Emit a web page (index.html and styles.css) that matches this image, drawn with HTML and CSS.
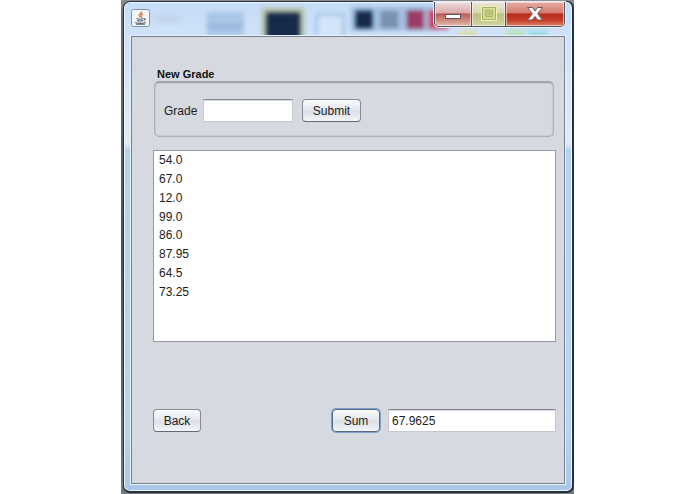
FILE: index.html
```html
<!DOCTYPE html>
<html lang="en">
<head>
<meta charset="utf-8">
<title>Grades</title>
<link rel="stylesheet" href="styles.css">
</head>
<body>
<div class="desktop">
  <div class="window">
    <svg class="glass" viewBox="0 0 447 35" preserveAspectRatio="none" aria-hidden="true">
      <defs>
        <filter id="soft" x="-30%" y="-30%" width="160%" height="160%"><feGaussianBlur stdDeviation="2"/></filter>
        <filter id="wide" x="-50%" y="-50%" width="200%" height="200%"><feGaussianBlur stdDeviation="4"/></filter>
      </defs>
      <rect x="30" y="13" width="25" height="7" fill="#a9b9cf" opacity=".4" filter="url(#wide)"/>
      <g filter="url(#soft)">
        <rect x="82" y="9" width="37" height="25" fill="#a9c6e8"/>
        <rect x="82" y="22" width="37" height="3" fill="#8fafd6"/>
        <rect x="137" y="5" width="43" height="34" fill="#b7c3a8"/>
        <rect x="192" y="12" width="27" height="30" fill="#d4e5f9" stroke="#a5c4e8" stroke-width="3"/>
        <rect x="226" y="3" width="90" height="26" fill="#a6c3e4"/>
        <rect x="256" y="8" width="18" height="18" fill="#7891ad"/>
        <rect x="282" y="7" width="18" height="20" fill="#9c3a68"/>
        <rect x="304" y="7" width="20" height="20" fill="#cf3c64"/>
        <rect x="334" y="28" width="18" height="10" fill="#d9dfae"/>
        <rect x="382" y="28" width="18" height="10" fill="#b5e3b9"/>
        <rect x="404" y="28" width="20" height="10" fill="#9edce6"/>
      </g>
      <g fill="#142a4a" filter="url(#soft)">
        <rect x="142" y="10" width="33" height="30"/>
        <rect x="142" y="10" width="33" height="30"/>
        <rect x="231" y="8" width="17" height="18"/>
      </g>
    </svg>
    <header class="titlebar">
      <svg class="java" viewBox="0 0 19 18" role="img" aria-label="Java">
        <rect x=".5" y=".5" width="18" height="17" rx="2" fill="#f3f5f7" stroke="#8292a5"/>
        <path d="M10.500 2.500c1 1.600-2.600 2.400-2.300 4 .1.800 1 1.200 1 2M12 5c-1.700.5-2.300 1.300-1.500 2.200.5.600.2 1-.3 1.500" fill="none" stroke="#dd7c42" stroke-width="1.400"/>
        <path d="M5.500 9.500c1.500.7 5 .7 7 0M6 11.500c1.500.6 4 .6 6 0M12.700 9.700c2-.5 2 1.300 0 1.800M4 13.500c2 .9 9 .9 11 0M5 15.300h9" fill="none" stroke="#56687c" stroke-width="1.100"/>
      </svg>
      <div class="captions">
        <button class="cap min" aria-label="Minimize">
          <svg viewBox="0 0 20 16"><rect x="2.500" y="8.500" width="15" height="4" fill="#fff" stroke="#5c5558"/></svg>
        </button>
        <button class="cap max" aria-label="Maximize">
          <svg viewBox="0 0 20 16"><rect x="2" y="0" width="16" height="15" fill="#eef2b0"/><path d="M3.500 1.500h13v12h-13zM6.500 4.500h7v6h-7z" fill="#d5dc92" stroke="#a5b365"/><rect x="7.500" y="5.500" width="5" height="4" fill="#b1c271"/></svg>
        </button>
        <button class="cap close" aria-label="Close">
          <svg viewBox="0 0 20 16"><path d="M2.500 1.500h5l2.500 3.500 2.500-3.500h5l-4.800 6.200 4.800 6.300h-5l-2.500-3.500-2.500 3.500h-5l4.800-6.300z" fill="#fff" stroke="#765254"/></svg>
        </button>
      </div>
    </header>
    <main class="content">
      <section class="group" aria-labelledby="group-title">
        <h1 id="group-title">New Grade</h1>
        <form class="panel">
          <label for="grade">Grade</label>
          <input id="grade" class="field short" type="text">
          <button class="btn submit" type="button">Submit</button>
        </form>
      </section>
      <div class="list">
        <ul>
          <li>54.0</li>
          <li>67.0</li>
          <li>12.0</li>
          <li>99.0</li>
          <li>86.0</li>
          <li>87.95</li>
          <li>64.5</li>
          <li>73.25</li>
        </ul>
      </div>
      <footer class="actions">
        <button class="btn" type="button">Back</button>
        <div class="result">
          <button class="btn active" type="button">Sum</button>
          <input class="field" type="text" value="67.9625" aria-label="Sum result">
        </div>
      </footer>
    </main>
  </div>
</div>
</body>
</html>
```
FILE: styles.css
```css
* {
  box-sizing: border-box;
}

body {
  margin: 0;
  background: #fff;
  color: #1c1c20;
  font: 12px/16px "Liberation Sans", Arial, sans-serif;
}

button,
input {
  margin: 0;
  font: inherit;
  color: inherit;
}

.desktop {
  display: flex;
  min-height: 100vh;
  margin: 0 121px;
  padding: 1px 0 1px 2px;
  background: linear-gradient(#8d8f92, #686e76 12px, #4b535c 50%, #737980);
}

.window {
  position: relative;
  flex: 1;
  display: flex;
  flex-direction: column;
  padding: 0 7px 7px;
  border: 1px solid #28323c;
  border-width: 1px 2px 2px 1px;
  border-radius: 7px;
  background: linear-gradient(#c6dcf7, #d0e3f9 36px, #e2ebf6 142px, #b5d4f0 148px, #b8d4f0 430px, #a9c5e8);
  box-shadow: inset 0 0 0 1px #eaf6ff;
}

.glass {
  position: absolute;
  inset: 1px 1px auto;
  width: calc(100% - 2px);
  height: 34px;
}

.titlebar {
  position: relative;
  display: flex;
  justify-content: space-between;
  align-items: flex-start;
  height: 34px;
}

.java {
  width: 19px;
  height: 18px;
  margin-top: 7px;
}

.captions {
  display: flex;
  height: 25px;
  border: 1px solid #4f5560;
  border-top: 0;
  border-radius: 0 0 5px 5px;
  box-shadow: 0 0 0 1px #e9eef6;
  overflow: hidden;
}

.cap {
  display: flex;
  justify-content: center;
  align-items: center;
  width: 36px;
  padding: 0;
  border: 0;
  border-right: 1px solid #5b5357;
  box-shadow: inset 0 0 0 1px #ffffff88;
}

.cap svg {
  width: 20px;
  height: 16px;
}

.min {
  width: 37px;
  background: linear-gradient(#eedce0, #dda9a9 45%, #b65c59 50%, #cc8b7b 75%, #dfbdb0);
}

.max {
  width: 34px;
  background: linear-gradient(#e9e4d8, #dcd6b0 45%, #bdbd82 50%, #d2d3a0);
}

.close {
  width: 58px;
  border-right: 0;
  background: linear-gradient(#e5aca4, #d57d70 45%, #b92d1b 50%, #c63d28 75%, #dd8065);
}

.content {
  position: relative;
  flex: 1;
  display: flex;
  flex-direction: column;
  padding: 30px 8px 51px 21px;
  border: 1px solid #77818e;
  box-shadow: 0 0 0 1px #e8f2fd;
  background: #d6d9e0;
}

.group {
  margin: 0 2px 0 1px;
}

h1 {
  margin: 0 3px;
  font-size: 11px;
  line-height: 14px;
  color: #111;
}

.panel {
  display: flex;
  align-items: center;
  height: 56px;
  padding: 2px 9px 0;
  border: 1px solid #adb0b7;
  border-top: 2px solid #a1a4ab;
  border-radius: 5px;
  box-shadow: inset 0 0 2px #a9acb3;
}

.panel label {
  flex: none;
  width: 39px;
}

.field {
  flex: 1;
  min-width: 0;
  height: 23px;
  padding: 0 3px;
  border: 1px solid #c6c9d0;
  border-top-color: #84878e;
  background: #fff;
  box-shadow: inset 0 1px 0 #d5d7dc;
}

.short {
  flex: none;
  width: 90px;
}

.btn {
  flex: none;
  width: 48px;
  height: 23px;
  padding: 0;
  border: 1px solid #868a93;
  border-bottom-color: #656a74;
  border-radius: 4px;
  background: linear-gradient(#fafbfc, #e5e8ed 45%, #dce0e7 55%, #f3f6fb);
}

.submit {
  width: 59px;
  margin-left: 9px;
}

.active {
  border-color: #536b85;
  box-shadow: 0 0 0 1px #7ea3c7;
}

.list {
  flex: none;
  height: 192px;
  margin-top: 13px;
  padding: 0 5px;
  border: 1px solid #9599a1;
  background: #fff;
}

.list ul {
  display: grid;
  grid-auto-rows: 1fr;
  align-items: center;
  height: 150px;
  margin: 0;
  padding: 0;
  list-style: none;
}

.actions {
  display: flex;
  justify-content: space-between;
  margin-top: auto;
}

.result {
  display: flex;
  gap: 8px;
  width: 224px;
}
```
